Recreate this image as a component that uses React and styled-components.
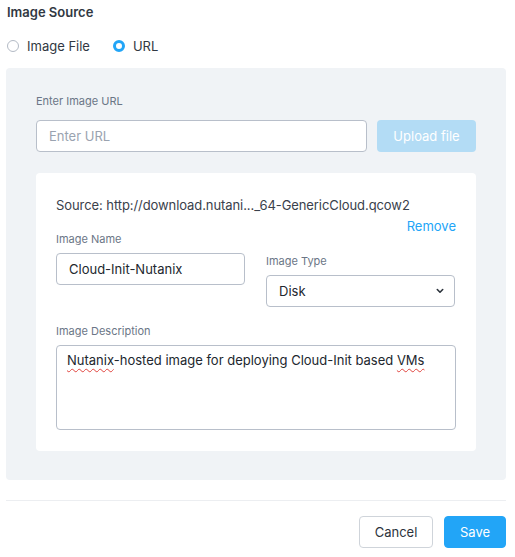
import React from "react";
import styled, { createGlobalStyle } from "styled-components";

const Global = createGlobalStyle`
  html, body { margin: 0; padding: 0; background: #fff; }
  body { font-family: Inter, Lato, sans-serif; color: #22272e; }
  * { box-sizing: border-box; }
`;

const Page = styled.div`
  width: 515px;
  padding: 4px 9px 0 6px;
`;

const Title = styled.div`
  font-size: 13px;
  font-weight: 600;
  color: #313842;
  padding-left: 1px;
  height: 16px;
  line-height: 16px;
`;

const RadioRow = styled.div`
  display: flex;
  align-items: center;
  gap: 23px;
  margin-top: 18px;
  padding-left: 1px;
  height: 16px;
`;

const RadioLabel = styled.label`
  display: flex;
  align-items: center;
  gap: 8px;
  font-size: 13px;
  color: #313842;
`;

const RadioDot = styled.span`
  width: 12px;
  height: 12px;
  border-radius: 50%;
  border: ${(p) => (p.$on ? "3.5px solid #22a5f7" : "1px solid #b3bac5")};
  background: #fff;
`;

const Panel = styled.div`
  margin-top: 14px;
  background: #f0f3f6;
  border-radius: 4px;
  padding: 26px 30px 29px;
`;

const Label = styled.div`
  font-size: 11px;
  color: #6b7686;
  line-height: 14px;
  margin-bottom: ${(p) => p.$mb ?? 7}px;
`;

const UrlRow = styled.div`
  display: flex;
  gap: 10px;
  margin-top: 12px;
`;

const Input = styled.div`
  flex: ${(p) => (p.$grow ? 1 : "none")};
  height: 32px;
  border: 1px solid #b8bfca;
  border-radius: 4px;
  background: #fff;
  display: flex;
  align-items: center;
  padding: 0 ${(p) => (p.$select ? 10 : 12)}px 0 12px;
  font-size: 13px;
  color: ${(p) => (p.$ph ? "#9aa3b0" : "#22272e")};
  justify-content: space-between;
`;

const UploadBtn = styled.div`
  width: 99px;
  height: 32px;
  border-radius: 4px;
  background: #b3dcf5;
  color: #fff;
  font-size: 13px;
  display: flex;
  align-items: center;
  justify-content: center;
`;

const Card = styled.div`
  margin-top: 21px;
  background: #fff;
  border-radius: 4px;
  padding: 24px 20px 21px;
`;

const Source = styled.div`
  font-size: 13px;
  color: #3a414b;
  line-height: 16px;
  letter-spacing: -0.08px;
`;

const RemoveRow = styled.div`
  display: flex;
  justify-content: flex-end;
  margin-top: 5px;
`;

const Link = styled.span`
  font-size: 13px;
  color: #22a5f7;
  line-height: 16px;
`;

const FieldsRow = styled.div`
  display: flex;
  gap: 21px;
  align-items: flex-start;
  margin-top: -2px;
`;

const Field = styled.div`
  display: flex;
  flex-direction: column;
  width: ${(p) => p.$w};
  margin-top: ${(p) => p.$mt || 0}px;
`;

const DescField = styled.div`
  margin-top: 17px;
`;

const TextBox = styled.div`
  height: 85px;
  border: 1px solid #b8bfca;
  border-radius: 4px;
  padding: 6px 10px;
  font-size: 13px;
  line-height: 16px;
  color: #22272e;
`;

const Spell = styled.span`
  text-decoration: underline wavy #e0443e;
  text-decoration-thickness: 1px;
  text-underline-offset: 3px;
`;

const Divider = styled.div`
  height: 1px;
  background: #eceef1;
  margin-top: 20px;
`;

const Footer = styled.div`
  display: flex;
  justify-content: flex-end;
  gap: 11px;
  margin-top: 15px;
`;

const Button = styled.div`
  height: 32px;
  width: ${(p) => (p.$primary ? 62 : 74)}px;
  border-radius: 4px;
  font-size: 13px;
  display: flex;
  align-items: center;
  justify-content: center;
  background: ${(p) => (p.$primary ? "#22a5f7" : "#fff")};
  color: ${(p) => (p.$primary ? "#fff" : "#2c333c")};
  border: 1px solid ${(p) => (p.$primary ? "#22a5f7" : "#cfd4da")};
`;

const Chevron = () => (
  <svg width="8" height="6" viewBox="0 0 8 6">
    <path d="M1.3 1.5 L4 4.2 L6.7 1.5" fill="none" stroke="#2c333c" strokeWidth="1.6" strokeLinecap="round" strokeLinejoin="round" />
  </svg>
);

export default function App() {
  return (
    <>
      <Global />
      <Page>
        <Title>Image Source</Title>
        <RadioRow>
          <RadioLabel><RadioDot />Image File</RadioLabel>
          <RadioLabel><RadioDot $on />URL</RadioLabel>
        </RadioRow>
        <Panel>
          <Label $mb={0}>Enter Image URL</Label>
          <UrlRow>
            <Input $grow $ph>Enter URL</Input>
            <UploadBtn>Upload file</UploadBtn>
          </UrlRow>
          <Card>
            <Source>Source: http://download.nutani..._64-GenericCloud.qcow2</Source>
            <RemoveRow><Link>Remove</Link></RemoveRow>
            <FieldsRow>
              <Field $w="189px">
                <Label>Image Name</Label>
                <Input>Cloud-Init-Nutanix</Input>
              </Field>
              <Field $w="189px" $mt={22}>
                <Label>Image Type</Label>
                <Input $select>Disk<Chevron /></Input>
              </Field>
            </FieldsRow>
            <DescField>
              <Label>Image Description</Label>
              <TextBox>
                <Spell>Nutanix</Spell>-hosted image for deploying Cloud-Init based <Spell>VMs</Spell>
              </TextBox>
            </DescField>
          </Card>
        </Panel>
        <Divider />
        <Footer>
          <Button>Cancel</Button>
          <Button $primary>Save</Button>
        </Footer>
      </Page>
    </>
  );
}
